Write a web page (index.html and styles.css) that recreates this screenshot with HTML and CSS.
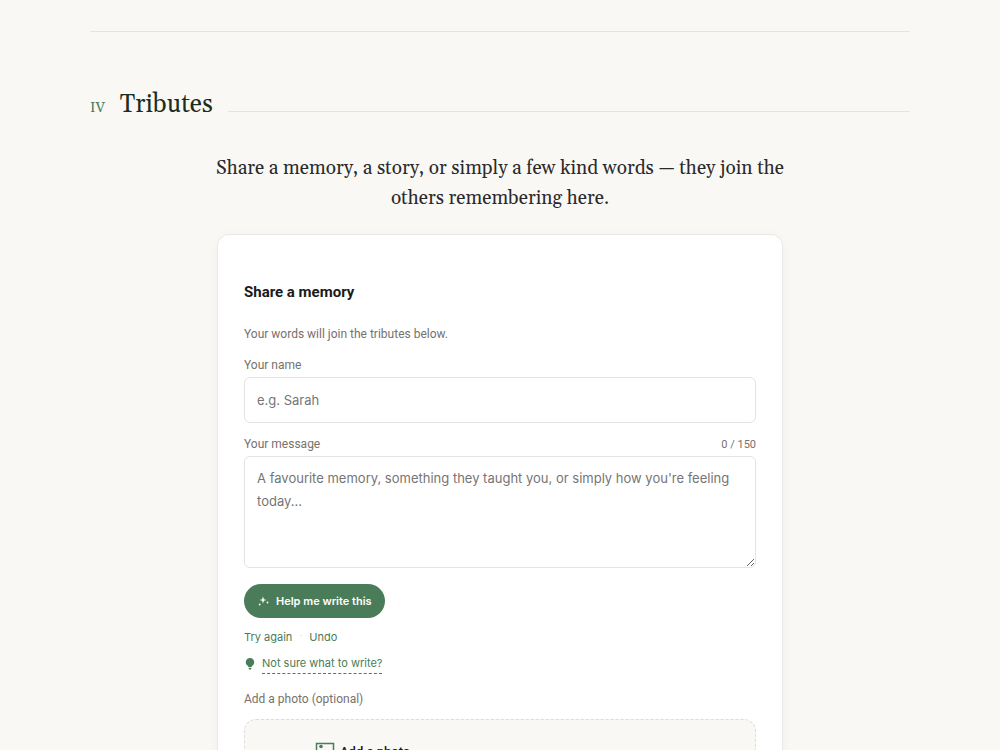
FILE: index.html
```html
<!DOCTYPE html>
<html lang="en">
<head>
<meta charset="utf-8">
<meta name="viewport" content="width=device-width, initial-scale=1">
<title>Tributes</title>
<link rel="stylesheet" href="styles.css">
</head>
<body>
<main class="page">
  <section class="tributes">
    <header class="section-head">
      <span class="numeral">IV</span>
      <h2 class="section-title">Tributes</h2>
      <span class="rule"></span>
    </header>
    <p class="intro">Share a memory, a story, or simply a few kind words — they join the others remembering here.</p>
    <form class="card">
      <h3 class="card-title">Share a memory</h3>
      <p class="card-note">Your words will join the tributes below.</p>
      <label class="label" for="name">Your name</label>
      <input class="field" id="name" type="text" placeholder="e.g. Sarah">
      <div class="label-row">
        <label class="label" for="message">Your message</label>
        <span class="count">0 / 150</span>
      </div>
      <textarea class="field message" id="message" maxlength="150" placeholder="A favourite memory, something they taught you, or simply how you're feeling today..."></textarea>
      <button class="help" type="button">
        <svg class="sparkle" viewBox="0 0 12 12" aria-hidden="true"><path d="M5.500 1.500l.9 2.700 2.600.8-2.600.8-.9 2.700-.9-2.700L2 5l2.600-.8z"/><circle cx="10" cy="7.500" r=".9"/><circle cx="2.200" cy="9.500" r=".9"/></svg>
        Help me write this
      </button>
      <div class="links">
        <button class="link" type="button">Try again</button>
        <span class="dot">·</span>
        <button class="link" type="button">Undo</button>
      </div>
      <div class="hint">
        <svg class="bulb" viewBox="0 0 12 14" aria-hidden="true"><path d="M6 1a4.200 4.200 0 0 0-2.300 7.700c.4.300.6.700.6 1.200h3.400c0-.5.2-.9.6-1.200A4.200 4.200 0 0 0 6 1zM4.500 10.700h3l-.5 1.700H5z"/></svg>
        <button class="link dashed" type="button">Not sure what to write?</button>
      </div>
      <label class="label" for="photo">Add a photo (optional)</label>
      <label class="drop" for="photo">
        <svg class="picture" viewBox="0 0 20 20" aria-hidden="true"><path d="M1.500 1.500h17v17h-17zM2 15l5-5 4 4 3-3 4 4" fill="none" stroke="currentColor" stroke-width="1.500"/><circle cx="6" cy="4.500" r="1.800" fill="currentColor"/></svg>
        <span class="drop-text">Add a photo</span>
        <input class="file" id="photo" type="file" accept="image/*">
      </label>
    </form>
  </section>
</main>
</body>
</html>
```

FILE: styles.css
```css
* { box-sizing: border-box; }
body {
  margin: 0;
  background: #f9f8f5;
  color: #1a1a1a;
  font-family: Roboto, Inter, sans-serif;
}
.page { max-width: 820px; margin: 0 auto; padding-top: 31px; }
.tributes { border-top: 1px solid #e5e4e0; padding-top: 57px; }
.section-head { display: flex; align-items: baseline; gap: 15px; }
.numeral { font: 14px/20px Georgia, Gelasio, "Liberation Serif", serif; color: #4a7c59; }
.section-title {
  margin: 0;
  font: 400 25px/32px Georgia, Gelasio, "Liberation Serif", serif;
  color: #1a2e22;
}
.rule { flex: 1; height: 1px; background: #e5e4e0; }
.intro {
  max-width: 576px;
  margin: 32px auto 21px;
  text-align: center;
  font: 19px/30px Georgia, Gelasio, "Liberation Serif", serif;
  color: #2a2a2a;
}
.card {
  max-width: 566px;
  margin: 0 auto;
  padding: 47px 26px;
  background: #fff;
  border: 1px solid #e9e8e5;
  border-radius: 12px;
  box-shadow: 0 2px 12px rgba(0, 0, 0, 0.04);
}
.card-title { margin: 0; font-size: 15px; line-height: 20px; font-weight: 700; }
.card-note { margin: 22px 0 0; font-size: 12px; line-height: 20px; color: #78716c; }
.label { display: block; margin-top: 12px; font-size: 12px; line-height: 18px; color: #78716c; }
.field {
  display: block;
  width: 100%;
  height: 46px;
  margin-top: 3px;
  padding: 10px 12px;
  border: 1px solid #e5e4e2;
  border-radius: 6px;
  background: #fff;
  font: 13px/23px Inter, "Liberation Sans", sans-serif;
}
.field::placeholder { color: #757575; }
.message { height: 112px; margin-top: 2px; resize: vertical; }
.label-row { display: flex; justify-content: space-between; align-items: baseline; }
.count { font-size: 11px; line-height: 18px; color: #78716c; }
.help {
  display: flex;
  align-items: center;
  gap: 6px;
  height: 34px;
  margin-top: 16px;
  padding: 0 13px;
  border: 0;
  border-radius: 17px;
  background: #4a7c59;
  color: #fff;
  font: 600 11px/16px Inter, "Liberation Sans", sans-serif;
}
.sparkle { width: 13px; height: 12px; fill: currentColor; }
.links { display: flex; gap: 7px; margin-top: 10px; }
.link {
  padding: 0;
  border: 0;
  background: none;
  color: #4a7c59;
  font: 11px/18px Inter, "Liberation Sans", sans-serif;
}
.dot { width: 3px; color: #d6d3d1; font-size: 11px; line-height: 18px; }
.hint { display: flex; align-items: center; gap: 6px; margin-top: 8px; }
.bulb { width: 12px; height: 14px; fill: #4a7c59; }
.dashed { padding-bottom: 1px; border-bottom: 1px dashed #4a7c59; }
.hint + .label { margin-top: 16px; }
.drop {
  display: flex;
  align-items: center;
  gap: 5px;
  height: 66px;
  margin-top: 11px;
  padding-left: 70px;
  border: 1px dashed #dddcd8;
  border-radius: 12px;
  background: #f9f8f5;
}
.picture { width: 20px; height: 20px; color: #4a7c59; }
.drop-text { font-size: 13px; line-height: 20px; font-weight: 500; }
.file { width: 0; opacity: 0; }
```
